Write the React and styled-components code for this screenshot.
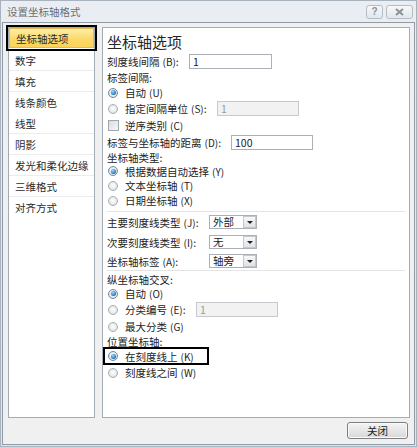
import React from 'react';
import styled, { createGlobalStyle, css } from 'styled-components';

const Global = createGlobalStyle`
  html, body { margin: 0; padding: 0; background: #fff; }
  body {
    font-family: "Noto Sans CJK SC", "Noto Sans", sans-serif;
    font-size: 10.5px;
    color: #232323;
  }
`;

const Window = styled.div`
  width: 417px;
  height: 447px;
  box-sizing: border-box;
  display: flex;
  flex-direction: column;
  background: linear-gradient(#eaeef3, #dfe5eb);
  border: 1px solid #a9b3be;
  padding: 0 1px 1px 1px;
`;

const TitleBar = styled.div`
  height: 21px;
  flex: none;
  display: flex;
  align-items: center;
  padding: 0 2px 0 5px;
`;

const Title = styled.div`
  flex: 1;
  color: #6b6f74;
  font-size: 10.5px;
  line-height: 12px;
  padding-top: 1px;
`;

const CapButton = styled.div`
  width: ${p => p.$w}px;
  height: 14px;
  box-sizing: border-box;
  margin-left: 3px;
  border: 1px solid #b4bcc5;
  border-radius: 3px;
  background: linear-gradient(#f6f8fa, #e3e7ec);
  display: flex;
  align-items: center;
  justify-content: center;
  color: #8a9096;
  font-family: "Liberation Sans", sans-serif;
  font-weight: bold;
  font-size: 10px;
  line-height: 10px;
`;

const Body = styled.div`
  flex: 1;
  display: flex;
  flex-direction: column;
  border: 1px solid #909ba7;
  background: #f0f0f0;
  padding: 4px 4px 0 5px;
  min-height: 0;
`;

const Panels = styled.div`
  height: 391px;
  display: flex;
  gap: 7px;
`;

const Nav = styled.div`
  width: 87px;
  box-sizing: border-box;
  border: 1px solid #a3abb4;
  background: #fff;
  display: flex;
  flex-direction: column;
`;

const NavItem = styled.div`
  height: ${p => (p.$sel ? 20 : 21)}px;
  box-sizing: border-box;
  padding-left: 6px;
  display: flex;
  align-items: center;
  border-bottom: 1px solid ${p => (p.$noline ? '#fff' : '#ececec')};
  white-space: nowrap;
  color: #2a2a2a;
  ${p =>
    p.$sel &&
    css`
      background: linear-gradient(#fdeea6, #fbd866 60%, #fbd35a);
      border: 1px solid #e2b956;
      outline: 2px solid #000;
      outline-offset: 1px;
      margin-bottom: 2px;
    `}
`;

const Content = styled.div`
  flex: 1;
  box-sizing: border-box;
  border: 1px solid #a3abb4;
  background: #fff;
  padding: 3px 4px 0 4px;
  display: flex;
  flex-direction: column;
`;

const Heading = styled.div`
  height: 22px;
  font-size: 15px;
  line-height: 22px;
  color: #262626;
  flex: none;
`;

const Row = styled.div`
  height: ${p => p.$h}px;
  flex: none;
  display: flex;
  align-items: center;
  white-space: nowrap;
`;

const Marked = styled(Row)`
  width: 102px;
  margin-left: -2px;
  padding-left: 2px;
  box-sizing: border-box;
  height: 14px;
  margin-top: 1px;
  margin-bottom: ${p => p.$mb}px;
  outline: 2px solid #000;
`;

const Label = styled.span`
  width: ${p => (p.$w ? `${p.$w}px` : 'auto')};
  flex: none;
  line-height: 13px;
`;

const Key = styled.span`
  margin-left: 3px;
  font-size: 10px;
`;

const Radio = styled.span`
  width: 10px;
  height: 10px;
  box-sizing: border-box;
  border-radius: 50%;
  border: 1px solid #a7adb4;
  background: radial-gradient(circle at 50% 45%, #ffffff 0%, #e6e8ea 60%, #cfd3d7 100%);
  position: relative;
  flex: none;
  margin-left: 1px;
  margin-right: 7px;
  ${p =>
    p.$on &&
    css`
      border-color: #6c8aa5;
      &::after {
        content: '';
        position: absolute;
        left: 1.5px;
        top: 1.5px;
        width: 5px;
        height: 5px;
        border-radius: 50%;
        background: radial-gradient(circle at 40% 35%, #a6dcf7 0%, #2f86c4 55%, #134f80 100%);
      }
    `}
`;

const Check = styled.span`
  width: 11px;
  height: 11px;
  box-sizing: border-box;
  border: 1px solid #a0a6ad;
  background: linear-gradient(135deg, #d8dbde, #f6f7f8);
  flex: none;
  margin-left: 1px;
  margin-right: 6px;
`;

const Input = styled.div`
  width: ${p => p.$w}px;
  height: 15px;
  box-sizing: border-box;
  border: 1px solid ${p => (p.$off ? '#c6c9cd' : '#acb0b6')};
  background: ${p => (p.$off ? '#f2f2f2' : '#fff')};
  color: ${p => (p.$off ? '#9a9a9a' : '#222')};
  padding-left: 3px;
  font-size: 10.5px;
  line-height: 13px;
  flex: none;
`;

const Select = styled.div`
  width: 48px;
  height: 14px;
  box-sizing: border-box;
  border: 1px solid #acb0b6;
  background: #fff;
  display: flex;
  flex: none;
`;

const SelectText = styled.span`
  flex: 1;
  padding-left: 3px;
  line-height: 12px;
`;

const SelectBtn = styled.span`
  width: 13px;
  box-sizing: border-box;
  border: 1px solid #c3c8ce;
  margin: 0 0 0 1px;
  background: linear-gradient(#f7f8f9, #dfe3e7);
  display: flex;
  align-items: center;
  justify-content: center;
  &::after {
    content: '';
    border-left: 3px solid transparent;
    border-right: 3px solid transparent;
    border-top: 3px solid #222;
  }
`;

const Sep = styled.div`
  height: 1px;
  flex: none;
  background: #e4e4e4;
  margin: ${p => p.$mt}px 0 0 0;
`;

const Footer = styled.div`
  height: 26px;
  display: flex;
  justify-content: flex-end;
  align-items: flex-start;
  padding-top: 4px;
  box-sizing: border-box;
`;

const Button = styled.div`
  width: 61px;
  height: 17px;
  box-sizing: border-box;
  margin-right: 2px;
  border: 1px solid #7b7f84;
  border-radius: 3px;
  background: linear-gradient(#f4f4f4, #e6e6e6 50%, #d9d9d9);
  box-shadow: inset 0 0 0 1px #fbfbfb;
  display: flex;
  align-items: center;
  justify-content: center;
  color: #1e1e1e;
  line-height: 12px;
`;

const navItems = ['数字', '填充', '线条颜色', '线型', '阴影', '发光和柔化边缘', '三维格式', '对齐方式'];

const Sel = ({ v }) => (
  <Select>
    <SelectText>{v}</SelectText>
    <SelectBtn />
  </Select>
);

export default function App() {
  return (
    <>
      <Global />
      <Window>
        <TitleBar>
          <Title>设置坐标轴格式</Title>
          <CapButton $w={17}>?</CapButton>
          <CapButton $w={27}>
            <svg width="9" height="8" viewBox="0 0 9 8">
              <path d="M1 1 L8 7 M8 1 L1 7" stroke="#8b9197" strokeWidth="2" fill="none" />
            </svg>
          </CapButton>
        </TitleBar>
        <Body>
          <Panels>
            <Nav>
              <NavItem $sel>坐标轴选项</NavItem>
              {navItems.map(t => (
                <NavItem key={t} $noline={t === '线条颜色' || t === '对齐方式'}>
                  {t}
                </NavItem>
              ))}
            </Nav>
            <Content>
              <Heading>坐标轴选项</Heading>
              <Row $h={17}>
                <Label $w={82}>刻度线间隔<Key>(B)</Key>:</Label>
                <Input $w={83}>1</Input>
              </Row>
              <Row $h={15}>
                <Label>标签间隔:</Label>
              </Row>
              <Row $h={15}>
                <Radio $on />
                <Label>自动<Key>(U)</Key></Label>
              </Row>
              <Row $h={17}>
                <Radio />
                <Label $w={92}>指定间隔单位<Key>(S)</Key>:</Label>
                <Input $w={82} $off>1</Input>
              </Row>
              <Row $h={17}>
                <Check />
                <Label>逆序类别<Key>(C)</Key></Label>
              </Row>
              <Row $h={16}>
                <Label $w={124}>标签与坐标轴的距离<Key>(D)</Key>:</Label>
                <Input $w={82}>100</Input>
              </Row>
              <Row $h={14}>
                <Label>坐标轴类型:</Label>
              </Row>
              <Row $h={14}>
                <Radio $on />
                <Label>根据数据自动选择<Key>(Y)</Key></Label>
              </Row>
              <Row $h={15}>
                <Radio />
                <Label>文本坐标轴<Key>(T)</Key></Label>
              </Row>
              <Row $h={15}>
                <Radio />
                <Label>日期坐标轴<Key>(X)</Key></Label>
              </Row>
              <Sep $mt={3} />
              <Row $h={20}>
                <Label $w={102}>主要刻度线类型<Key>(J)</Key>:</Label>
                <Sel v="外部" />
              </Row>
              <Row $h={20}>
                <Label $w={102}>次要刻度线类型<Key>(I)</Key>:</Label>
                <Sel v="无" />
              </Row>
              <Row $h={18}>
                <Label $w={102}>坐标轴标签<Key>(A)</Key>:</Label>
                <Sel v="轴旁" />
              </Row>
              <Sep $mt={0} />
              <Row $h={16}>
                <Label>纵坐标轴交叉:</Label>
              </Row>
              <Row $h={13}>
                <Radio $on />
                <Label>自动<Key>(O)</Key></Label>
              </Row>
              <Row $h={19}>
                <Radio />
                <Label $w={71}>分类编号<Key>(E)</Key>:</Label>
                <Input $w={82} $off>1</Input>
              </Row>
              <Row $h={15}>
                <Radio />
                <Label>最大分类<Key>(G)</Key></Label>
              </Row>
              <Row $h={14}>
                <Label>位置坐标轴:</Label>
              </Row>
              <Marked $mb={1}>
                <Radio $on />
                <Label>在刻度线上<Key>(K)</Key></Label>
              </Marked>
              <Row $h={17}>
                <Radio />
                <Label>刻度线之间<Key>(W)</Key></Label>
              </Row>
            </Content>
          </Panels>
          <Footer>
            <Button>关闭</Button>
          </Footer>
        </Body>
      </Window>
    </>
  );
}
